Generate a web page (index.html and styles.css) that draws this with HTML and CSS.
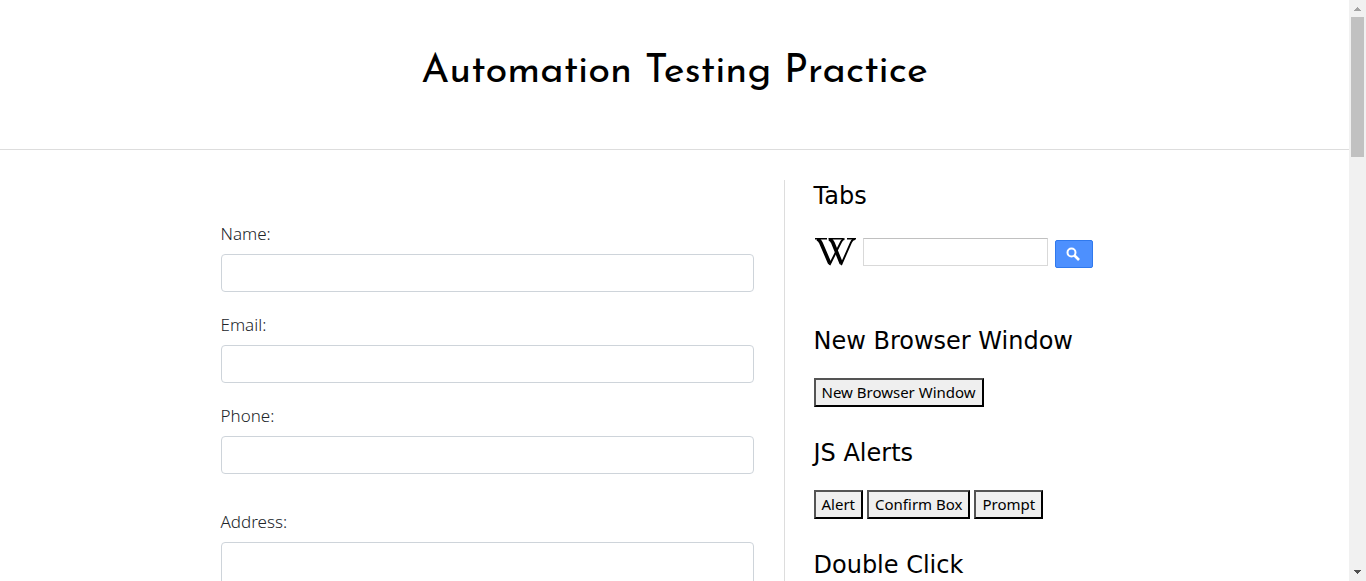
FILE: index.html
```html
<!DOCTYPE html>
<html lang="en">
<head>
<meta charset="utf-8">
<title>Automation Testing Practice</title>
<link rel="stylesheet" href="styles.css">
</head>
<body>
<div class="page">
  <header class="header"><h1 class="title">Automation Testing Practice</h1></header>
  <div class="columns">
    <main class="main">
      <form class="form">
        <div class="field"><label class="label" for="name">Name:</label><input class="control" id="name" type="text"></div>
        <div class="field"><label class="label" for="email">Email:</label><input class="control" id="email" type="text"></div>
        <div class="field"><label class="label" for="phone">Phone:</label><input class="control" id="phone" type="text"></div>
        <div class="field field-address"><label class="label" for="address">Address:</label><textarea class="control control-area" id="address"></textarea></div>
      </form>
    </main>
    <aside class="sidebar">
      <section class="widget">
        <h2 class="heading">Tabs</h2>
        <form class="search">
          <a class="wiki" href="#" aria-label="Wikipedia">
            <svg width="42" height="28" viewBox="0 0 42 28" fill="none" stroke="#000">
              <path d="M1 .8h12M14.500 .8h15M33 .8h9" stroke-width="1.500"/>
              <path d="M3 1C5.500 1.500 6 3 7 5L15.800 25.500M15 1C17.500 1.500 18 3 19 5L27.300 25.500" stroke-width="3.600"/>
              <path d="M15.500 27L27 4C28 2 29 1 30.500 1M27 27L37 4.500C38 2 39 1 41 1" stroke-width="1.900"/>
            </svg>
          </a>
          <input class="search-input" type="text" aria-label="Search">
          <button class="search-button" type="button" aria-label="Search">
            <svg width="14" height="14" viewBox="0 0 14 14" fill="none" stroke="#fff">
              <circle cx="5.500" cy="5.500" r="4" stroke-width="2"/><path d="M8.500 8.500l4.500 4.500" stroke-width="2.600"/>
            </svg>
          </button>
        </form>
      </section>
      <section class="widget">
        <h2 class="heading">New Browser Window</h2>
        <div class="buttons"><button class="button" type="button">New Browser Window</button></div>
      </section>
      <section class="widget">
        <h2 class="heading">JS Alerts</h2>
        <div class="buttons">
          <button class="button" type="button">Alert</button>
          <button class="button" type="button">Confirm Box</button>
          <button class="button" type="button">Prompt</button>
        </div>
      </section>
      <section class="widget"><h2 class="heading">Double Click</h2></section>
    </aside>
  </div>
</div>
<div class="scrollbar" aria-hidden="true">
  <svg class="arrow" width="17" height="17" viewBox="0 0 17 17" shape-rendering="crispEdges"><path d="M5 11h7L8.500 7z" fill="#a3a3a3"/></svg>
  <div class="thumb"></div>
  <svg class="arrow arrow-down" width="17" height="17" viewBox="0 0 17 17" shape-rendering="crispEdges"><path d="M5 6h7L8.500 10z" fill="#505050"/></svg>
</div>
</body>
</html>
```
FILE: styles.css
```css
* {
  box-sizing: border-box;
}
body {
  margin: 0;
  height: 100vh;
  display: flex;
  overflow: hidden;
  background: #fff;
  color: #000;
  font-family: "Noto Sans", sans-serif;
}
.page {
  flex: 1;
  min-width: 0;
}
.header {
  padding: 48px 20px 53px;
  border-bottom: 1px solid #ddd;
  text-align: center;
}
.title {
  margin: 0;
  font: 400 40px/48px "Josefin Sans", Lato, sans-serif;
}
.columns {
  display: grid;
  grid-template-columns: minmax(0, 563px) minmax(0, 1fr);
  max-width: 908px;
  margin: 30px auto 0;
}
.main {
  padding: 41px 30px 0 0;
}
.form {
  display: flex;
  flex-direction: column;
  gap: 20px;
}
.field {
  display: flex;
  flex-direction: column;
  gap: 7px;
}
.field-address {
  margin-top: 15px;
}
.label {
  color: #212529;
  font-size: 17px;
  font-weight: 300;
  line-height: 26px;
}
.control {
  width: 100%;
  height: 38px;
  padding: 6px 12px;
  border: 1px solid #ced4da;
  border-radius: 4px;
  background: #fff;
  font: inherit;
  outline: none;
}
.control-area {
  height: 86px;
  resize: none;
}
.sidebar {
  display: flex;
  flex-direction: column;
  gap: 30px;
  padding-left: 29px;
  border-left: 1px solid #ddd;
}
.heading {
  margin: 0 0 21px;
  font: 400 24px/32px "DejaVu Sans", sans-serif;
}
.search {
  display: flex;
  align-items: flex-start;
  padding: 5px 0 27px;
}
.wiki {
  display: flex;
  margin-right: 7px;
}
.search-input {
  width: 185px;
  height: 28px;
  padding: 0 8px;
  border: 1px solid #d9d9d9;
  border-top-color: #c0c0c0;
}
.search-button {
  display: flex;
  align-items: center;
  justify-content: center;
  width: 38px;
  height: 28px;
  margin: 2px 0 0 7px;
  padding: 0 2px 0 0;
  border: 1px solid #3079ed;
  border-radius: 2px;
  background: #4d90fe;
}
.buttons {
  display: flex;
  gap: 4px;
}
.button {
  padding: 1px 6px;
  border: 2px outset #000;
  background: #efefef;
  color: #000;
  font: 400 15px/23px "Noto Sans", sans-serif;
}
.scrollbar {
  display: flex;
  flex-direction: column;
  width: 17px;
  background: #f1f1f1;
}
.arrow {
  display: block;
}
.arrow-down {
  margin-top: auto;
}
.thumb {
  height: 140px;
  margin: 0 2px;
  background: #c1c1c1;
}
```
